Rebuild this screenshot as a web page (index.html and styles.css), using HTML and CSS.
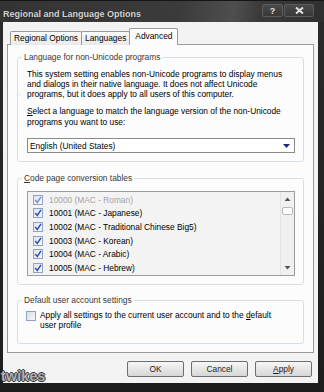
FILE: index.html
```html
<!DOCTYPE html>
<html lang="en">
<head>
  <meta charset="UTF-8" />
  <title>Regional and Language Options</title>
  <link rel="stylesheet" href="styles.css">
</head>
<body>

<div class="window">
  <div class="titlebar">
    <span class="title">Regional and Language Options</span>
    <div class="caption-buttons">
      <span class="cbtn help">?</span>
      <span class="cbtn close">
        <svg width="9" height="7" viewBox="0 0 9 7"><path d="M1 0.5 L8 6.5 M8 0.5 L1 6.5" stroke="#e0e0e0" stroke-width="2"/></svg>
      </span>
    </div>
  </div>

  <div class="client">
    <!-- TABS -->
    <div class="tabs">
      <div class="tab">Regional Options</div>
      <div class="tab">Languages</div>
      <div class="tab active">Advanced</div>
    </div>

    <div class="page">
      <fieldset class="group g1">
        <legend>Language for non-Unicode programs</legend>
        <div class="group-body">
          <p class="para">This system setting enables non-Unicode programs to display menus<br>and dialogs in their native language. It does not affect Unicode<br>programs, but it does apply to all users of this computer.</p>
          <p class="para second"><u>S</u>elect a language to match the language version of the non-Unicode<br>programs you want to use:</p>
          <div class="combo">
            <span>English (United States)</span>
            <svg class="combo-arrow" width="7" height="4" viewBox="0 0 7 4"><path d="M0 0 H7 L3.5 4 Z" fill="#1c2a6e"/></svg>
          </div>
        </div>
      </fieldset>

      <fieldset class="group g2">
        <legend><u>C</u>ode page conversion tables</legend>
        <div class="group-body">
          <div class="listbox">
            <div class="items">
              <div class="item disabled"><span class="chk"><svg width="8" height="8" viewBox="0 0 8 8"><path d="M1.2 4 L3.3 6.5 L7 0.8" fill="none" stroke="#7a8fcc" stroke-width="1.5"/></svg></span>10000 (MAC - Roman)</div>
              <div class="item"><span class="chk"><svg width="8" height="8" viewBox="0 0 8 8"><path d="M1.2 4 L3.3 6.5 L7 0.8" fill="none" stroke="#2f52b8" stroke-width="1.5"/></svg></span>10001 (MAC - Japanese)</div>
              <div class="item"><span class="chk"><svg width="8" height="8" viewBox="0 0 8 8"><path d="M1.2 4 L3.3 6.5 L7 0.8" fill="none" stroke="#2f52b8" stroke-width="1.5"/></svg></span>10002 (MAC - Traditional Chinese Big5)</div>
              <div class="item"><span class="chk"><svg width="8" height="8" viewBox="0 0 8 8"><path d="M1.2 4 L3.3 6.5 L7 0.8" fill="none" stroke="#2f52b8" stroke-width="1.5"/></svg></span>10003 (MAC - Korean)</div>
              <div class="item"><span class="chk"><svg width="8" height="8" viewBox="0 0 8 8"><path d="M1.2 4 L3.3 6.5 L7 0.8" fill="none" stroke="#2f52b8" stroke-width="1.5"/></svg></span>10004 (MAC - Arabic)</div>
              <div class="item"><span class="chk"><svg width="8" height="8" viewBox="0 0 8 8"><path d="M1.2 4 L3.3 6.5 L7 0.8" fill="none" stroke="#2f52b8" stroke-width="1.5"/></svg></span>10005 (MAC - Hebrew)</div>
            </div>
            <div class="scrollbar">
              <svg class="sb-arrow" width="13" height="14" viewBox="0 0 13 14"><path d="M3.5 9 H9.5 L6.5 5.5 Z" fill="#555"/></svg>
              <div class="thumb"></div>
              <div class="track"></div>
              <svg class="sb-arrow" width="13" height="14" viewBox="0 0 13 14"><path d="M3.5 5 H9.5 L6.5 8.5 Z" fill="#555"/></svg>
            </div>
          </div>
        </div>
      </fieldset>

      <fieldset class="group g3">
        <legend>Default user account settings</legend>
        <div class="group-body">
          <div class="check-row">
            <span class="box"></span>
            <span class="check-label">Apply all settings to the current user account and to the <u>d</u>efault<br>user profile</span>
          </div>
        </div>
      </fieldset>
    </div>

    <div class="buttons">
      <button>OK</button>
      <button>Cancel</button>
      <button><u>A</u>pply</button>
    </div>
  </div>

  <div class="watermark">twikes</div>
</div>

</body>
</html>
```

FILE: styles.css
```css
body {
  margin: 0;
  background: #1c1c1c;
  font-family: 'Liberation Sans', Arial, sans-serif;
  font-size: 8.35px;
  color: #000;
}

.window {
  position: relative;
  width: 324px;
  height: 392px;
  display: flex;
  flex-direction: column;
  background: linear-gradient(to bottom, #2b2b2b, #1d1d1d);
  overflow: hidden;
}

/* title bar */
.titlebar {
  height: 22px;
  flex: none;
  display: flex;
  align-items: flex-start;
  justify-content: space-between;
  padding: 0 10px 0 3px;
  background: linear-gradient(100deg, #343434 0%, #3b3b3b 55%, #4e4e4e 72%, #3a3a3a 80%, #2f2f2f 100%);
  border-top: 1px solid #151515;
  box-sizing: border-box;
}

.title {
  margin-top: 8px;
  font-size: 9px;
  line-height: 11px;
  font-weight: bold;
  color: #d6d6d6;
  text-shadow: 0 0 1px #111;
}

.caption-buttons {
  display: flex;
  margin-top: 3px;
  gap: 1px;
}

.cbtn {
  height: 11px;
  display: flex;
  align-items: center;
  justify-content: center;
  background: linear-gradient(to bottom, #4a4a4a, #383838);
  border: 1px solid #5c5c5c;
  border-radius: 2px;
  color: #e0e0e0;
  font-weight: bold;
  font-size: 9px;
}

.help { width: 19px; }
.close { width: 28px; }

/* client area */
.client {
  flex: 1;
  margin: 0 6px 9px 3px;
  padding: 7px 4px 0 4px;
  background: #f3f3f3;
  display: flex;
  flex-direction: column;
}

.tabs {
  display: flex;
  align-items: flex-end;
  padding-left: 3px;
  height: 16px;
  position: relative;
  z-index: 1;
  margin-bottom: -1px;
}

.tab {
  height: 13px;
  line-height: 13px;
  padding: 0 3px;
  border: 1px solid #9a9a9a;
  border-bottom: none;
  border-radius: 2px 2px 0 0;
  background: linear-gradient(to bottom, #fafafa, #e9e9e9);
  margin-right: -1px;
  white-space: nowrap;
}

.tab.active {
  height: 16px;
  line-height: 15px;
  padding: 0 5px;
  background: #fcfcfc;
}

.page {
  height: 309px;
  box-sizing: border-box;
  border: 1px solid #9a9a9a;
  background: #fcfcfc;
  padding: 7px 9px 0 9px;
}

/* group boxes */
.group {
  margin: 0;
  padding: 0;
  border: 1px solid #d6dfe6;
  border-radius: 3px;
  min-width: 0;
}

.group legend {
  margin-left: 4px;
  padding: 0 2px;
  line-height: 10px;
  color: #3a3a3a;
}

.group-body {
  padding: 0 8px 0 9px;
}

.g1 .group-body { padding-top: 7px; padding-bottom: 8px; }
.g2 { margin-top: 11px; }
.g2 .group-body { padding-top: 8px; padding-bottom: 8px; }
.g3 { margin-top: 10px; }
.g3 .group-body { padding-top: 5px; padding-bottom: 13px; }

.para {
  margin: 0;
  line-height: 10px;
  white-space: nowrap;
}

.para.second {
  margin-top: 7px;
  line-height: 11px;
}

.combo {
  margin-top: 10px;
  height: 15px;
  box-sizing: border-box;
  border: 1px solid #8a8a8a;
  background: #fff;
  display: flex;
  align-items: center;
  justify-content: space-between;
  padding: 0 4px 0 2px;
}

/* list */
.listbox {
  display: flex;
  height: 85px;
  box-sizing: border-box;
  border: 1px solid #9c9c9c;
  background: #f3f3f3;
}

.items {
  flex: 1;
  padding-top: 1px;
}

.item {
  height: 13.6px;
  display: flex;
  align-items: center;
  padding-left: 5px;
  white-space: nowrap;
}

.item.disabled { color: #a3a3a3; }

.chk {
  width: 8px;
  height: 8px;
  margin-right: 6px;
  border: 1px solid #8fa3c3;
  background: linear-gradient(135deg, #dfe5ee, #f7f9fb);
  display: flex;
}

.scrollbar {
  width: 13px;
  display: flex;
  flex-direction: column;
  background: #f0f0f0;
  border-left: 1px solid #e4e4e4;
}

.sb-arrow { display: block; }

.thumb {
  height: 6px;
  margin: 1px 1px 0;
  background: #fdfdfd;
  border: 1px solid #b8b8b8;
  border-radius: 2px;
}

.track { flex: 1; }

/* checkbox */
.check-row {
  display: flex;
  align-items: flex-start;
}

.box {
  width: 8px;
  height: 8px;
  margin-top: 1px;
  margin-left: -1px;
  margin-right: 4px;
  border: 1px solid #8fa3c3;
  background: linear-gradient(135deg, #d9dfe8, #f6f7f9);
  flex: none;
}

.check-label {
  line-height: 10px;
  white-space: nowrap;
}

/* bottom buttons */
.buttons {
  display: flex;
  justify-content: flex-end;
  gap: 7px;
  margin-top: 8px;
  margin-right: 2px;
}

button {
  width: 57px;
  height: 16px;
  padding: 0;
  font-family: inherit;
  font-size: 8.35px;
  color: #222;
  border: 1px solid #6e6e6e;
  border-radius: 2px;
  background: linear-gradient(to bottom, #f7f7f7, #e6e6e6 50%, #d6d6d6);
}

.watermark {
  position: absolute;
  left: 1px;
  bottom: 9px;
  font-family: 'Liberation Sans Narrow', 'Liberation Sans', sans-serif;
  font-weight: bold;
  font-size: 14px;
  line-height: 13px;
  color: #b0b0b0;
  letter-spacing: 0.3px;
  text-shadow: 1px 0 0 #3a3a3a, -1px 0 0 #3a3a3a, 0 1px 0 #3a3a3a, 0 -1px 0 #3a3a3a;
}
```
